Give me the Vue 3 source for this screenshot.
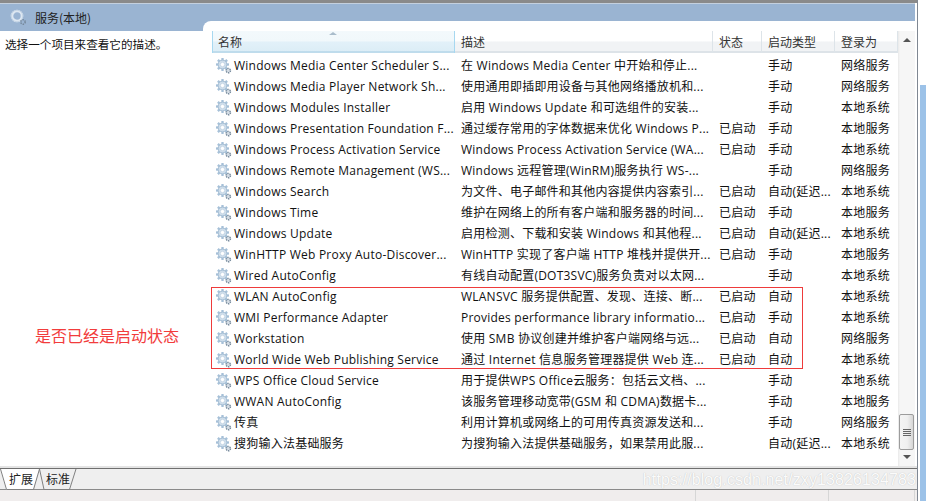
<script setup>
const rows = [
  ['Windows Media Center Scheduler S...', '在 Windows Media Center 中开始和停止...', '', '手动', '网络服务'],
  ['Windows Media Player Network Sh...', '使用通用即插即用设备与其他网络播放机和...', '', '手动', '网络服务'],
  ['Windows Modules Installer', '启用 Windows Update 和可选组件的安装...', '', '手动', '本地系统'],
  ['Windows Presentation Foundation F...', '通过缓存常用的字体数据来优化 Windows P...', '已启动', '手动', '本地服务'],
  ['Windows Process Activation Service', 'Windows Process Activation Service (WA...', '已启动', '手动', '本地系统'],
  ['Windows Remote Management (WS...', 'Windows 远程管理(WinRM)服务执行 WS-...', '', '手动', '网络服务'],
  ['Windows Search', '为文件、电子邮件和其他内容提供内容索引...', '已启动', '自动(延迟...', '本地系统'],
  ['Windows Time', '维护在网络上的所有客户端和服务器的时间...', '已启动', '手动', '本地服务'],
  ['Windows Update', '启用检测、下载和安装 Windows 和其他程...', '已启动', '自动(延迟...', '本地系统'],
  ['WinHTTP Web Proxy Auto-Discover...', 'WinHTTP 实现了客户端 HTTP 堆栈并提供开...', '已启动', '手动', '本地服务'],
  ['Wired AutoConfig', '有线自动配置(DOT3SVC)服务负责对以太网...', '', '手动', '本地系统'],
  ['WLAN AutoConfig', 'WLANSVC 服务提供配置、发现、连接、断...', '已启动', '自动', '本地系统'],
  ['WMI Performance Adapter', 'Provides performance library informatio...', '已启动', '手动', '本地系统'],
  ['Workstation', '使用 SMB 协议创建并维护客户端网络与远...', '已启动', '自动', '网络服务'],
  ['World Wide Web Publishing Service', '通过 Internet 信息服务管理器提供 Web 连...', '已启动', '自动', '本地系统'],
  ['WPS Office Cloud Service', '用于提供WPS Office云服务：包括云文档、...', '', '手动', '本地系统'],
  ['WWAN AutoConfig', '该服务管理移动宽带(GSM 和 CDMA)数据卡...', '', '手动', '本地服务'],
  ['传真', '利用计算机或网络上的可用传真资源发送和...', '', '手动', '网络服务'],
  ['搜狗输入法基础服务', '为搜狗输入法提供基础服务，如果禁用此服...', '', '自动(延迟...', '本地系统'],
]
const columns = ['名称', '描述', '状态', '启动类型', '登录为']
const teeth = [0, 45, 90, 135]
</script>

<template>
  <div class="window">
    <div class="main">
      <div class="content">
        <header class="titlebar">
          <svg class="title-icon" width="18" height="18" viewBox="0 0 18 18">
            <circle cx="7" cy="7" r="5" fill="none" stroke="#dde7f1" stroke-width="2.6" />
            <circle cx="7" cy="7" r="5.8" fill="none" stroke="#b9cbdf" stroke-width="0.7" />
            <circle cx="13" cy="13" r="2.2" fill="none" stroke="#76899c" stroke-width="1.5" stroke-dasharray="1.3 0.9" />
          </svg>
          <span class="title">服务(本地)</span>
        </header>
        <div class="body">
          <aside class="side">选择一个项目来查看它的描述。</aside>
          <section class="panel">
            <div class="listing">
              <div class="table">
                <div class="thead">
                  <div v-for="c in columns" :key="c" class="th">{{ c }}</div>
                  <span class="sort"></span>
                </div>
                <div v-for="r in rows" :key="r[0]" class="tr">
                  <div class="td name">
                    <svg class="gear" width="16" height="16" viewBox="0 0 16 16">
                      <g stroke="#a6c0d8" stroke-width="2.3">
                        <line v-for="t in teeth" :key="t" x1="6.5" y1="0" x2="6.5" y2="13" :transform="`rotate(${t} 6.5 6.5)`" />
                      </g>
                      <circle cx="6.5" cy="6.5" r="4.4" fill="#cfdeeb" stroke="#a3bdd4" stroke-width="1" />
                      <circle cx="6.5" cy="6.5" r="2.2" fill="#fff" stroke="#c0d2e2" stroke-width="0.8" />
                      <circle cx="12.3" cy="12.6" r="2.2" fill="#d5dde5" stroke="#74889b" stroke-width="1.4" stroke-dasharray="1.3 0.8" />
                    </svg>
                    <span>{{ r[0] }}</span>
                  </div>
                  <div class="td">{{ r[1] }}</div>
                  <div class="td">{{ r[2] }}</div>
                  <div class="td">{{ r[3] }}</div>
                  <div class="td">{{ r[4] }}</div>
                </div>
              </div>
              <div class="scrollbar">
                <span class="arrow up"></span>
                <div class="track">
                  <div class="thumb"><i></i><i></i><i></i><i></i></div>
                </div>
                <span class="arrow down"></span>
              </div>
            </div>
          </section>
          <div class="annotation-box"></div>
          <div class="annotation-label">是否已经是启动状态</div>
        </div>
        <footer class="tabs">
          <svg class="tab-shapes" width="80" height="21" viewBox="0 0 80 21">
            <polygon points="0,0 6,20.5 33,20.5 39,0" fill="#fff" />
            <path d="M0.5 0 L6.5 20.5 H33.5 L39.5 0 L44 20.5 H69.5 L76 0" fill="none" stroke="#808080" stroke-width="1" />
          </svg>
          <div class="tab">扩展</div>
          <div class="tab">标准</div>
          <span class="watermark">https://blog.csdn.net/zxy13826134783</span>
        </footer>
      </div>
      <div class="statusbar"><span></span><span></span></div>
    </div>
    <div class="edge"></div>
  </div>
</template>

<style>
html, body { margin: 0; background: #fff; overflow: hidden; }
</style>

<style scoped>
.window {
  width: 926px;
  height: 501px;
  display: flex;
  background: #fff;
  font-family: "Open Sans", "Noto Sans CJK SC", sans-serif;
  font-size: 12px;
  letter-spacing: 0.23px;
  color: #111;
  overflow: hidden;
}
.main {
  width: 918px;
  flex: none;
  display: flex;
  flex-direction: column;
  border-right: 1px solid #7f8792;
  box-sizing: border-box;
}
.edge {
  flex: 1;
  margin: 85px 0 0 2px;
  background: #9cc2e8;
}
.content {
  height: 490px;
  flex: none;
  box-sizing: border-box;
  border-top: 3px solid #8a8a8a;
  display: flex;
  flex-direction: column;
  padding-right: 2px;
}
.titlebar {
  height: 28px;
  flex: none;
  box-sizing: border-box;
  border-top: 1px solid #c4d0de;
  background: #9ab4d2;
  display: flex;
  align-items: center;
  padding-left: 10px;
  gap: 7px;
}
.title-icon { flex: none; margin-top: 1px; }
.title { font-family: "Noto Sans CJK SC", sans-serif; font-size: 12px; letter-spacing: 0; color: #222; }
.body {
  position: relative;
  flex: 1;
  display: flex;
  min-height: 0;
}
.side {
  width: 203px;
  flex: none;
  box-sizing: border-box;
  padding: 5px 0 0 5px;
  font-family: "Noto Sans CJK SC", sans-serif;
  font-size: 11.6px;
  letter-spacing: 0;
  line-height: 16px;
}
.panel {
  flex: 1;
  margin-top: -10px;
  background: #fff;
  border-top-left-radius: 8px;
  padding: 10px 0 0 9px;
  min-width: 0;
  display: flex;
  flex-direction: column;
}
.listing { display: flex; flex: 1; min-height: 0; }
.table { flex: 1; min-width: 0; }
.thead, .tr {
  display: grid;
  grid-template-columns: 243px 258px 49px 73px 63px;
}
.thead {
  position: relative;
  height: 22px;
  background: linear-gradient(#fff 0, #fff 45%, #f1f3f5 50%, #f1f3f5 92%, #dde3e8 92%);
  margin-right: 1px;
}
.th {
  padding-left: 6px;
  border-right: 1px solid #dde4e9;
  font-family: "Noto Sans CJK SC", sans-serif;
  font-size: 12px;
  letter-spacing: 0;
  line-height: 22px;
  color: #333;
  white-space: nowrap;
}
.th:first-child {
  background: linear-gradient(#f3f9fc 0, #f1f8fb 45%, #e2f1f9 50%, #dcedf6 92%, #bfdcec 92%);
  border-left: 1px solid #a7d8f0;
  border-right: 1px solid #a7d8f0;
  padding-left: 5px;
}
.sort {
  position: absolute;
  left: 117px;
  top: 1px;
  border-left: 4px solid transparent;
  border-right: 4px solid transparent;
  border-bottom: 3px solid #a9bccb;
}
.tr { height: 21px; line-height: 21px; }
.thead + .tr { margin-top: 2px; }
.td {
  padding-left: 6px;
  white-space: nowrap;
  overflow: hidden;
}
.name { display: flex; align-items: center; padding-left: 4px; gap: 2px; }
.gear { flex: none; }
.scrollbar {
  width: 17px;
  flex: none;
  display: flex;
  flex-direction: column;
  align-items: center;
  height: 435px;
  background: linear-gradient(90deg, #e9e9e9 0, #f6f6f6 12%, #f6f6f6 100%);
}
.arrow {
  width: 0;
  height: 0;
  flex: none;
  border-left: 4px solid transparent;
  border-right: 4px solid transparent;
}
.arrow.up { border-bottom: 4px solid #555; margin-top: 7px; }
.arrow.down { border-top: 4px solid #555; margin-bottom: 7px; }
.track { flex: 1; width: 100%; display: flex; flex-direction: column; justify-content: flex-end; align-items: center; padding-bottom: 5px; box-sizing: border-box; }
.thumb {
  width: 15px;
  height: 36px;
  box-sizing: border-box;
  border: 1px solid #9c9c9c;
  border-radius: 2px;
  background: linear-gradient(90deg, #f4f4f4, #f0f0f0 55%, #d6d6d6);
  display: flex;
  flex-direction: column;
  align-items: center;
  justify-content: center;
  gap: 1px;
}
.thumb i { display: block; width: 8px; height: 1px; background: #666; }
.annotation-box {
  position: absolute;
  left: 211px;
  top: 256px;
  width: 590px;
  height: 80px;
  border: 1px solid #ee3b3b;
}
.annotation-label {
  position: absolute;
  left: 35px;
  top: 293px;
  font-family: "Noto Sans CJK SC", sans-serif;
  font-size: 16px;
  letter-spacing: 0;
  line-height: 22px;
  color: #f23c3c;
  white-space: nowrap;
}
.tabs {
  position: relative;
  z-index: 1;
  height: 22px;
  flex: none;
  box-sizing: border-box;
  border-top: 1px solid #6f6f6f;
  border-bottom: 1px solid #8a8a8a;
  background: #efefef;
  display: flex;
  box-shadow: 0 -2px 0 #e4e4e4;
  padding-left: 9px;
  gap: 13px;
  margin-right: -2px;
}
.tab-shapes { position: absolute; left: 0; top: 0; }
.tab {
  position: relative;
  font-family: "Noto Sans CJK SC", sans-serif;
  font-size: 12px;
  letter-spacing: 0;
  line-height: 20px;
  width: 24px;
  text-align: center;
  color: #222;
}
.watermark {
  position: absolute;
  right: 1px;
  top: 1px;
  font-family: "Liberation Sans", sans-serif;
  font-size: 16px;
  line-height: 20px;
  letter-spacing: 0.1px;
  color: #fbfbfb;
  text-shadow: 0 0 1px #b8b8b8;
  white-space: nowrap;
}
.statusbar {
  flex: 1;
  background: #f0eded;
  display: flex;
  justify-content: flex-end;
  padding-right: 2px;
}
.statusbar span { width: 133px; border-left: 1px solid #d6d6d6; box-sizing: border-box; }
.statusbar span:last-child { width: 87px; border-right: 1px solid #d6d6d6; }
</style>
